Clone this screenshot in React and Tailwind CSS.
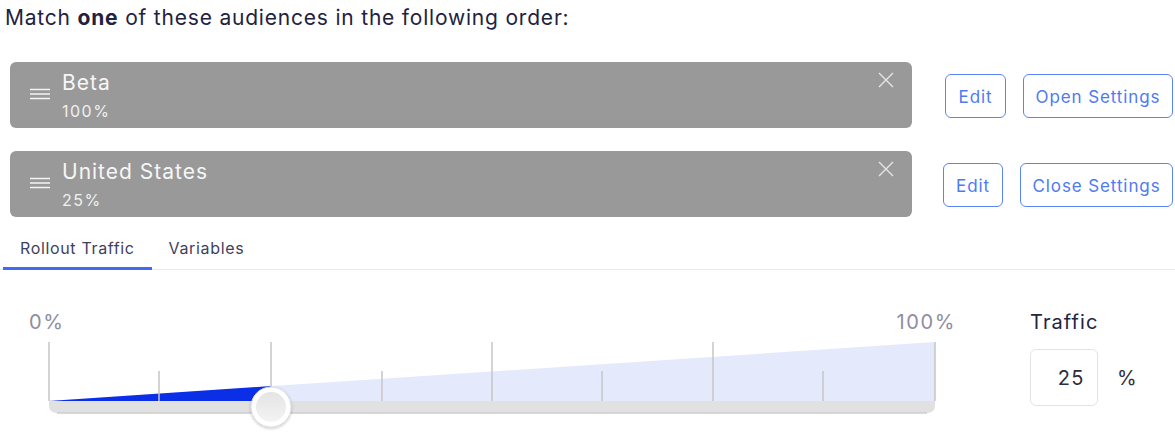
import React from "react";

const font = { fontFamily: "Inter, 'Noto Sans', sans-serif" };

function Hamburger() {
  return (
    <svg width="20" height="12" viewBox="0 0 20 12" className="shrink-0">
      <path d="M0 1.5H20M0 6H20M0 10.5H20" stroke="#f4f4f4" strokeWidth="1.6" />
    </svg>
  );
}

function CloseX() {
  return (
    <svg width="16" height="16" viewBox="0 0 16 16">
      <path d="M1 1L15 15M15 1L1 15" stroke="#e6e6e6" strokeWidth="1.4" />
    </svg>
  );
}

function AudienceRow({ name, pct, edit, settings, editW, setW }) {
  return (
    <div className="flex items-center">
      <div className="ml-[10px] w-[902px] h-[66px] rounded-[6px] bg-[#999999] flex items-start relative">
        <div className="pl-[20px] pt-[26px]">
          <Hamburger />
        </div>
        <div className="ml-[12px] pt-[7px] flex flex-col">
          <span className="text-[21px] leading-[27px] tracking-[1px] text-[#f6f6f6]">{name}</span>
          <span className="text-[16px] leading-[20px] mt-[5px] tracking-[1.5px] text-[#f0f0f0]">{pct}</span>
        </div>
        <div className="absolute right-[18px] top-[10px]">
          <CloseX />
        </div>
      </div>
      <div className="flex-1 flex justify-end gap-[17px] pr-[2px] mt-[2px]">
        <button className={`${editW} h-[44px] pt-[3px] rounded-[6px] border border-[#5b83f7] text-[17px] tracking-[0.9px] text-[#4f7af2] bg-white`}>
          {edit}
        </button>
        <button className={`${setW} h-[44px] pt-[3px] rounded-[6px] border border-[#5b83f7] text-[17px] tracking-[0.9px] text-[#4f7af2] bg-white`}>
          {settings}
        </button>
      </div>
    </div>
  );
}

function Slider() {
  const tall = [49, 271, 492, 713, 935];
  const short = [159, 382, 602, 823];
  return (
    <svg width="960" height="92" viewBox="0 0 960 92" className="block">
      <defs>
        <linearGradient id="knobIn" x1="0" y1="0" x2="0" y2="1">
          <stop offset="0" stopColor="#e4e4e4" />
          <stop offset="1" stopColor="#f3f3f3" />
        </linearGradient>
        <filter id="sh" x="-50%" y="-50%" width="200%" height="200%">
          <feDropShadow dx="0" dy="1" stdDeviation="1.5" floodColor="#000" floodOpacity="0.25" />
        </filter>
      </defs>
      <polygon points="49,62 935,3 935,62" fill="#e4e9fc" />
      <polygon points="49,62 271,47 271,62" fill="#0a2fe6" />
      <path d="M49 62 H935 V66 Q935 74 927 74 H57 Q49 74 49 66 Z" fill="#e1e1e1" />
      <path d="M57 74 H927" stroke="#cdcdcd" strokeWidth="1.5" />
      {tall.map((x) => (
        <line key={x} x1={x} y1="3" x2={x} y2="62" stroke="#c6c6c6" strokeWidth="1.5" />
      ))}
      {short.map((x) => (
        <line key={x} x1={x} y1="32" x2={x} y2="62" stroke="#c6c6c6" strokeWidth="1.5" />
      ))}
      <circle cx="271" cy="68" r="20" fill="#ffffff" stroke="#dddddd" strokeWidth="1" filter="url(#sh)" />
      <circle cx="271" cy="68" r="15" fill="url(#knobIn)" />
    </svg>
  );
}

export default function App() {
  return (
    <div className="w-[1175px] h-[435px] bg-white overflow-hidden" style={font}>
      <div className="pl-[5px] pt-[4px] text-[21px] leading-[28px] tracking-[0.8px] text-[#22223f]">
        Match <span className="font-bold">one</span> of these audiences in the following order:
      </div>
      <div className="mt-[30px] flex flex-col gap-[23px]">
        <AudienceRow name="Beta" pct="100%" edit="Edit" settings="Open Settings" editW="w-[61px]" setW="w-[150px]" />
        <AudienceRow name="United States" pct="25%" edit="Edit" settings="Close Settings" editW="w-[60px]" setW="w-[153px]" />
      </div>
      <div className="mt-[13px] flex border-b border-[#ececec] pl-[3px]">
        <div className="px-[17px] pt-[8px] pb-[9px] border-b-[3px] border-[#4169f5] -mb-px text-[16px] leading-[20px] tracking-[0.65px] text-[#3f3f60]">
          Rollout Traffic
        </div>
        <div className="px-[17px] pt-[8px] pb-[9px] text-[16px] leading-[20px] tracking-[0.65px] text-[#3f3f60]">
          Variables
        </div>
      </div>
      <div className="flex mt-[40px]">
        <div className="flex flex-col w-[960px]">
          <div className="flex justify-between pl-[29px] w-[956px] text-[20px] leading-[24px] tracking-[1.6px] text-[#8d8da3]">
            <span>0%</span>
            <span>100%</span>
          </div>
          <div className="mt-[5px]">
            <Slider />
          </div>
        </div>
        <div className="ml-[70px] flex flex-col">
          <span className="text-[20px] leading-[24px] tracking-[1.1px] text-[#24243f]">Traffic</span>
          <div className="mt-[15px] flex items-center">
            <div className="w-[68px] h-[57px] rounded-[6px] border border-[#e3e3e3] flex items-center justify-end pr-[12px] text-[20px] tracking-[1.5px] text-[#2e2e3a]">
              25
            </div>
            <span className="ml-[19px] text-[20px] text-[#2e2e44]">%</span>
          </div>
        </div>
      </div>
    </div>
  );
}
